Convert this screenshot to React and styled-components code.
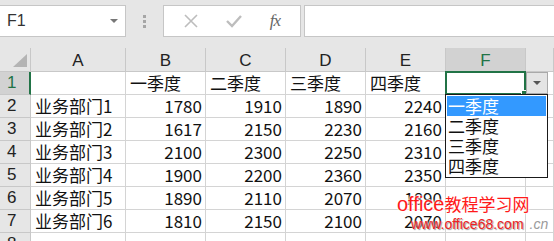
import React from 'react';
import styled, { createGlobalStyle } from 'styled-components';

const Global = createGlobalStyle`
  html, body { margin: 0; padding: 0; background: #ffffff; overflow: hidden; }
  body { font-family: "Noto Sans CJK SC", "Liberation Sans", sans-serif; }
`;

const GREEN = '#217346';
const GRID = '#d4d4d4';

const Page = styled.div`
  position: relative;
  width: 554px;
  height: 241px;
  overflow: hidden;
  background: #fff;
`;

const TopBar = styled.div`
  height: 48px;
  background: #e6e6e6;
  display: flex;
  align-items: flex-start;
  padding-top: 5px;
  box-sizing: border-box;
`;

const NameBox = styled.div`
  width: 126px;
  height: 32px;
  box-sizing: border-box;
  background: #fff;
  border: 1px solid #c6c6c6;
  border-left: none;
  display: flex;
  align-items: center;
  justify-content: space-between;
  padding: 0 7px 0 7px;
  font-family: "Liberation Sans", sans-serif;
  font-size: 16px;
  color: #333;
`;

const SmallArrow = styled.span`
  width: 0;
  height: 0;
  border-left: 4px solid transparent;
  border-right: 4px solid transparent;
  border-top: 4px solid ${p => p.color || '#777'};
`;

const Grip = styled.div`
  width: 37px;
  height: 32px;
  display: flex;
  flex-direction: column;
  align-items: center;
  justify-content: center;
  gap: 2px;
  & > i {
    width: 3px;
    height: 3px;
    background: #a6a6a6;
  }
`;

const FxBox = styled.div`
  width: 138px;
  height: 32px;
  box-sizing: border-box;
  background: #fff;
  border: 1px solid #c6c6c6;
  display: flex;
  align-items: center;
  justify-content: space-around;
  padding: 0 6px;
`;

const FxLabel = styled.span`
  font-family: "Liberation Serif", serif;
  font-style: italic;
  font-size: 17px;
  color: #666;
  letter-spacing: -1px;
`;

const FormulaInput = styled.div`
  flex: 1;
  height: 32px;
  box-sizing: border-box;
  margin-left: 3px;
  background: #fff;
  border: 1px solid #c6c6c6;
  border-right: none;
`;

const Sheet = styled.div`
  display: grid;
  grid-template-columns: 31px 95px 80px 80px 80px 80px 80px 1fr;
  grid-auto-rows: 23px;
  grid-template-rows: 24px;
`;

const ColHead = styled.div`
  position: relative;
  background: ${p => (p.active ? '#d2d2d2' : '#e6e6e6')};
  border-right: 1px solid #c8c8c8;
  border-bottom: 1px solid ${p => (p.active ? GREEN : '#c8c8c8')};
  color: ${p => (p.active ? GREEN : '#222')};
  font-family: "Liberation Sans", sans-serif;
  font-size: 17px;
  display: flex;
  align-items: center;
  justify-content: center;
  padding-top: 2px;
  box-sizing: border-box;
`;

const Corner = styled(ColHead)`
  padding: 0;
  &::after {
    content: '';
    position: absolute;
    right: 3px;
    bottom: 4px;
    width: 0;
    height: 0;
    border-left: 14px solid transparent;
    border-bottom: 13px solid #b4b4b4;
  }
`;

const RowHead = styled.div`
  background: ${p => (p.active ? '#d2d2d2' : '#e6e6e6')};
  border-right: ${p => (p.active ? `2px solid ${GREEN}` : '1px solid #c8c8c8')};
  border-bottom: 1px solid #c8c8c8;
  color: ${p => (p.active ? GREEN : '#222')};
  font-family: "Liberation Sans", sans-serif;
  font-size: 17px;
  line-height: 22px;
  padding-left: 7px;
  box-sizing: border-box;
`;

const Cell = styled.div`
  position: relative;
  border-right: 1px solid ${GRID};
  border-bottom: 1px solid ${GRID};
  box-sizing: border-box;
  font-size: 17px;
  line-height: 22px;
  color: #111;
  white-space: nowrap;
  text-align: ${p => (p.num ? 'right' : 'left')};
  padding: ${p => (p.num ? '0 3px 0 0' : '0 0 0 4px')};
`;

const Selection = styled.div`
  position: absolute;
  left: -1px;
  top: -1px;
  right: -1px;
  bottom: -1px;
  border: 2px solid ${GREEN};
  z-index: 2;
  &::after {
    content: '';
    position: absolute;
    right: -4px;
    bottom: -4px;
    width: 5px;
    height: 5px;
    background: ${GREEN};
    border: 1px solid #fff;
  }
`;

const DropButton = styled.div`
  position: absolute;
  left: 80px;
  top: 0;
  width: 22px;
  height: 22px;
  box-sizing: border-box;
  background: #e4e4e4;
  border: 1px solid #a9a9a9;
  display: flex;
  align-items: center;
  justify-content: center;
  z-index: 3;
`;

const List = styled.div`
  position: absolute;
  left: -1px;
  top: 22px;
  width: 103px;
  box-sizing: border-box;
  background: #fff;
  border: 1px solid #1a1a1a;
  padding: 1px;
  z-index: 4;
`;

const ListItem = styled.div`
  height: 20px;
  line-height: 20px;
  font-size: 17px;
  padding-left: 1px;
  background: ${p => (p.selected ? '#3399ff' : 'transparent')};
  color: ${p => (p.selected ? '#fff' : '#111')};
`;

const Watermark = styled.div`
  position: absolute;
  left: 397px;
  top: 193px;
  z-index: 5;
  display: flex;
  flex-direction: column;
  align-items: flex-start;
  pointer-events: none;
`;

const MarkTitle = styled.div`
  color: #ff1a1a;
  font-size: 17px;
  line-height: 22px;
  white-space: nowrap;
  text-shadow: 0 0 2px #fff, 0 0 2px #fff, 0 0 3px #fff;
  & > b {
    font-family: "Liberation Sans", sans-serif;
    font-weight: normal;
    font-size: 20px;
  }
`;

const MarkUrl = styled.div`
  display: flex;
  align-items: baseline;
  margin-left: 14px;
  margin-top: 1px;
  font-family: "Liberation Sans", sans-serif;
  font-size: 14px;
  line-height: 16px;
  color: #ee2222;
  white-space: nowrap;
  text-shadow: 1px 1px 1px #999, 0 0 2px #fff;
  & > i {
    font-style: italic;
    color: #9a9a9a;
    margin-left: 6px;
    text-shadow: none;
  }
`;

const cols = ['A', 'B', 'C', 'D', 'E', 'F', ''];
const quarters = ['一季度', '二季度', '三季度', '四季度'];
const data = [
  ['业务部门1', 1780, 1910, 1890, 2240],
  ['业务部门2', 1617, 2150, 2230, 2160],
  ['业务部门3', 2100, 2300, 2250, 2310],
  ['业务部门4', 1900, 2200, 2360, 2350],
  ['业务部门5', 1890, 2110, 2070, 1890],
  ['业务部门6', 1810, 2150, 2100, 2070],
];

const XIcon = () => (
  <svg width="14" height="14" viewBox="0 0 14 14">
    <path d="M1 1 L13 13 M13 1 L1 13" stroke="#bdbdbd" strokeWidth="1.6" fill="none" />
  </svg>
);

const CheckIcon = () => (
  <svg width="16" height="14" viewBox="0 0 16 14">
    <path d="M1 7 L6 12 L15 2" stroke="#bdbdbd" strokeWidth="2.4" fill="none" />
  </svg>
);

export default function App() {
  return (
    <Page>
      <Global />
      <TopBar>
        <NameBox>
          <span>F1</span>
          <SmallArrow />
        </NameBox>
        <Grip><i /><i /><i /></Grip>
        <FxBox>
          <XIcon />
          <CheckIcon />
          <FxLabel>fx</FxLabel>
        </FxBox>
        <FormulaInput />
      </TopBar>

      <Sheet>
        <Corner />
        {cols.map((c, i) => (
          <ColHead key={i} active={c === 'F'}>{c}</ColHead>
        ))}

        <RowHead active>1</RowHead>
        <Cell />
        {quarters.map(q => <Cell key={q}>{q}</Cell>)}
        <Cell>
          <Selection />
          <DropButton><SmallArrow color="#555" /></DropButton>
          <List>
            {quarters.map((q, i) => (
              <ListItem key={q} selected={i === 0}>{q}</ListItem>
            ))}
          </List>
        </Cell>
        <Cell />

        {data.map((row, r) => (
          <React.Fragment key={r}>
            <RowHead>{r + 2}</RowHead>
            <Cell>{row[0]}</Cell>
            {row.slice(1).map((v, j) => <Cell key={j} num>{v}</Cell>)}
            <Cell />
            <Cell />
          </React.Fragment>
        ))}

        <RowHead>8</RowHead>
        {cols.map((c, i) => <Cell key={i} />)}
      </Sheet>

      <Watermark>
        <MarkTitle><b>office</b>教程学习网</MarkTitle>
        <MarkUrl>www.office68.com<i>.cn</i></MarkUrl>
      </Watermark>
    </Page>
  );
}
